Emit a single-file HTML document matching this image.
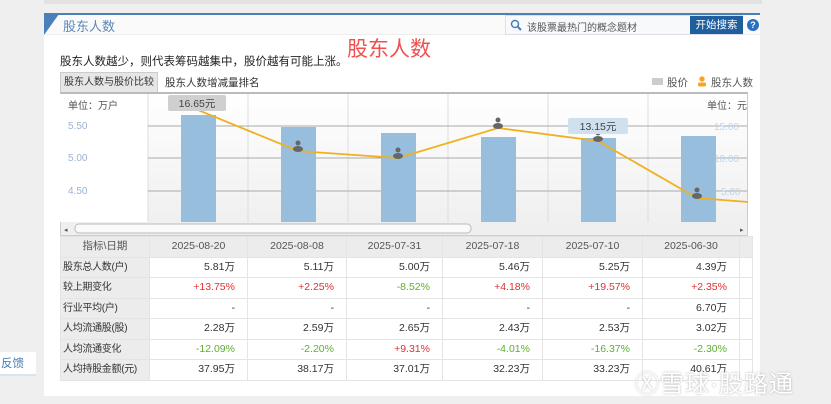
<!DOCTYPE html><html><head><meta charset="utf-8"><style>
*{margin:0;padding:0;box-sizing:border-box}
body{width:831px;height:404px;overflow:hidden;background:#efefef;font-family:"Liberation Sans","Noto Sans CJK SC",sans-serif;position:relative;font-size:11px;color:#333}
.a{position:absolute}
table{border-collapse:collapse;position:absolute;left:60px;top:236px;table-layout:fixed}
td{height:20.5px;line-height:19px;border:1px solid #e4e4e4;text-align:right;padding:0 12px 0 0;font-size:10.5px;background:#fff;white-space:nowrap;overflow:hidden}
td.l{text-align:left;padding-left:2px;background:#ececec;color:#333;font-size:10px;letter-spacing:-0.3px}
tr.h td{background:#ececec;text-align:center;padding:0;color:#555}
.r{color:#e03030}.g{color:#5cb030}
</style></head><body>
<div class="a" style="left:44px;top:0;width:718px;height:4px;background:#e2e2e2"></div>
<div class="a" style="left:44px;top:13px;width:716px;height:383px;background:#fff;border-top:2px solid #4a7fb8"></div>
<div class="a" style="left:44px;top:15px;width:716px;height:20px;background:#fafafa;border-bottom:1px solid #eee"></div>
<svg class="a" style="left:44px;top:14px" width="16" height="22"><polygon points="0,0 15,0 0,21" fill="#4a7fb8"/></svg>
<div class="a" style="left:63px;top:16px;font-size:13px;color:#5a88b8">股东人数</div>
<div class="a" style="left:505px;top:15px;width:238px;height:20px;border:1px solid #dde;background:#f8f9fb"></div>
<svg class="a" style="left:510px;top:19px" width="12" height="12"><circle cx="5" cy="5" r="3.5" stroke="#4a7fb8" stroke-width="1.5" fill="none"/><line x1="7.5" y1="7.5" x2="11" y2="11" stroke="#4a7fb8" stroke-width="2"/></svg>
<div class="a" style="left:527px;top:19px;font-size:10px;color:#555">该股票最热门的概念题材</div>
<div class="a" style="left:690px;top:16px;width:53px;height:18px;background:#1f5f9e;color:#fff;font-size:10.5px;text-align:center;line-height:18px">开始搜索</div>
<div class="a" style="left:747px;top:19px;width:12px;height:12px;border-radius:50%;background:#2b6fc0;color:#fff;font-size:9px;font-weight:bold;text-align:center;line-height:12px">?</div>
<div class="a" style="left:347px;top:33px;font-size:21px;color:#f05050">股东人数</div>
<div class="a" style="left:60px;top:53px;font-size:11.5px;color:#222">股东人数越少，则代表筹码越集中，股价越有可能上涨。</div>
<div class="a" style="left:60px;top:72px;width:98px;height:20px;background:#e6e6e6;border:1px solid #ccc;border-bottom:none;font-size:10px;text-align:center;line-height:19px">股东人数与股价比较</div>
<div class="a" style="left:165px;top:75px;font-size:10.5px">股东人数增减量排名</div>
<div class="a" style="left:652px;top:78px;width:11px;height:7px;background:#ccc"></div>
<div class="a" style="left:667px;top:75px;font-size:10.5px;color:#555">股价</div>
<svg class="a" style="left:697px;top:76px" width="10" height="11"><circle cx="5" cy="3" r="2.7" fill="#f5a623"/><rect x="1" y="6.5" width="8" height="4" rx="1.5" fill="#f5a623"/></svg>
<div class="a" style="left:711px;top:75px;font-size:10.5px;color:#555">股东人数</div>
<div class="a" style="left:60px;top:92px;width:688px;height:144px;border:1px solid #ccc;border-top:2px solid #bbb;background:linear-gradient(#fff,#eee)"></div>
<div class="a" style="left:60px;top:94px;width:88px;height:128px;background:#fff"></div>
<div class="a" style="left:68px;top:97px;font-size:10px;color:#555">单位：万户</div>
<div class="a" style="left:68px;top:121px;font-size:10px;color:#9ab4d6">5.50</div>
<div class="a" style="left:68px;top:153px;font-size:10px;color:#9ab4d6">5.00</div>
<div class="a" style="left:68px;top:186px;font-size:10px;color:#9ab4d6">4.50</div>
<div class="a" style="left:707px;top:97px;font-size:10px;color:#555">单位：元</div>
<svg class="a" style="left:0;top:0" width="831" height="240">
<g stroke="#ddd"><line x1="148" y1="94" x2="148" y2="222"/><line x1="248" y1="94" x2="248" y2="222"/><line x1="348" y1="94" x2="348" y2="222"/><line x1="448" y1="94" x2="448" y2="222"/><line x1="548" y1="94" x2="548" y2="222"/><line x1="648" y1="94" x2="648" y2="222"/></g>
<g stroke="#aaa"><line x1="148" y1="126" x2="747" y2="126"/><line x1="148" y1="158" x2="747" y2="158"/><line x1="148" y1="191" x2="747" y2="191"/></g>
<g fill="#97bedd"><rect x="181" y="115" width="35" height="107"/><rect x="281" y="127" width="35" height="95"/><rect x="381" y="133" width="35" height="89"/><rect x="481" y="137" width="35" height="85"/><rect x="581" y="138" width="35" height="84"/><rect x="681" y="136" width="35" height="86"/></g>
<polyline points="198,110 298,151 398,158 498,128 598,141 697,198 748,202" fill="none" stroke="#f0b020" stroke-width="1.8"/>
<g fill="#666"><circle cx="298" cy="143" r="2.5"/><ellipse cx="298" cy="149" rx="5" ry="3"/><circle cx="398" cy="150" r="2.5"/><ellipse cx="398" cy="156" rx="5" ry="3"/><circle cx="498" cy="120" r="2.5"/><ellipse cx="498" cy="126" rx="5" ry="3"/><circle cx="598" cy="133" r="2.5"/><ellipse cx="598" cy="139" rx="5" ry="3"/><circle cx="697" cy="190" r="2.5"/><ellipse cx="697" cy="196" rx="5" ry="3"/></g>
<g fill="#c0d4ea" font-size="10" font-family="Liberation Sans"><text x="714" y="130">15.00</text><text x="714" y="162">10.00</text><text x="721" y="195">5.00</text></g>
<rect x="168" y="95" width="58" height="16" rx="2" fill="#cfcfcf"/><text x="197" y="107" text-anchor="middle" font-size="10.5" fill="#444" font-family="Liberation Sans">16.65元</text>
<rect x="568" y="118" width="60" height="16" rx="2" fill="#cfe0ee"/><text x="598" y="130" text-anchor="middle" font-size="10.5" fill="#444" font-family="Liberation Sans">13.15元</text>
<rect x="61" y="222" width="686" height="13" fill="#efefef"/>
<rect x="75" y="224" width="396" height="9" rx="4" fill="#fafafa" stroke="#bbb"/>
<text x="64" y="232" font-size="7" fill="#555">◂</text><text x="740" y="232" font-size="7" fill="#555">▸</text>
</svg>
<table><colgroup><col style="width:88px"><col style="width:98px"><col style="width:99px"><col style="width:96px"><col style="width:100px"><col style="width:100px"><col style="width:97px"><col style="width:13px"></colgroup>
<tr class="h"><td>指标\日期</td><td>2025-08-20</td><td>2025-08-08</td><td>2025-07-31</td><td>2025-07-18</td><td>2025-07-10</td><td>2025-06-30</td><td></td></tr>
<tr><td class="l">股东总人数(户)</td><td>5.81万</td><td>5.11万</td><td>5.00万</td><td>5.46万</td><td>5.25万</td><td>4.39万</td><td></td></tr>
<tr><td class="l">较上期变化</td><td class="r">+13.75%</td><td class="r">+2.25%</td><td class="g">-8.52%</td><td class="r">+4.18%</td><td class="r">+19.57%</td><td class="r">+2.35%</td><td></td></tr>
<tr><td class="l">行业平均(户)</td><td>-</td><td>-</td><td>-</td><td>-</td><td>-</td><td>6.70万</td><td></td></tr>
<tr><td class="l">人均流通股(股)</td><td>2.28万</td><td>2.59万</td><td>2.65万</td><td>2.43万</td><td>2.53万</td><td>3.02万</td><td></td></tr>
<tr><td class="l">人均流通变化</td><td class="g">-12.09%</td><td class="g">-2.20%</td><td class="r">+9.31%</td><td class="g">-4.01%</td><td class="g">-16.37%</td><td class="g">-2.30%</td><td></td></tr>
<tr><td class="l">人均持股金额(元)</td><td>37.95万</td><td>38.17万</td><td>37.01万</td><td>32.23万</td><td>33.23万</td><td>40.61万</td><td></td></tr>
</table>
<div class="a" style="left:0;top:352px;width:36px;height:24px;background:#fff;border-bottom:2px solid #d8e4f0;font-size:11.5px;color:#4a7fb8;line-height:24px;padding-left:1px">反馈</div>
<div class="a" style="left:635px;top:364px;font-size:24px;color:#fff;text-shadow:0 0 2px #aaa;letter-spacing:1px">Ⓧ雪球·股路通</div>
</body></html>
